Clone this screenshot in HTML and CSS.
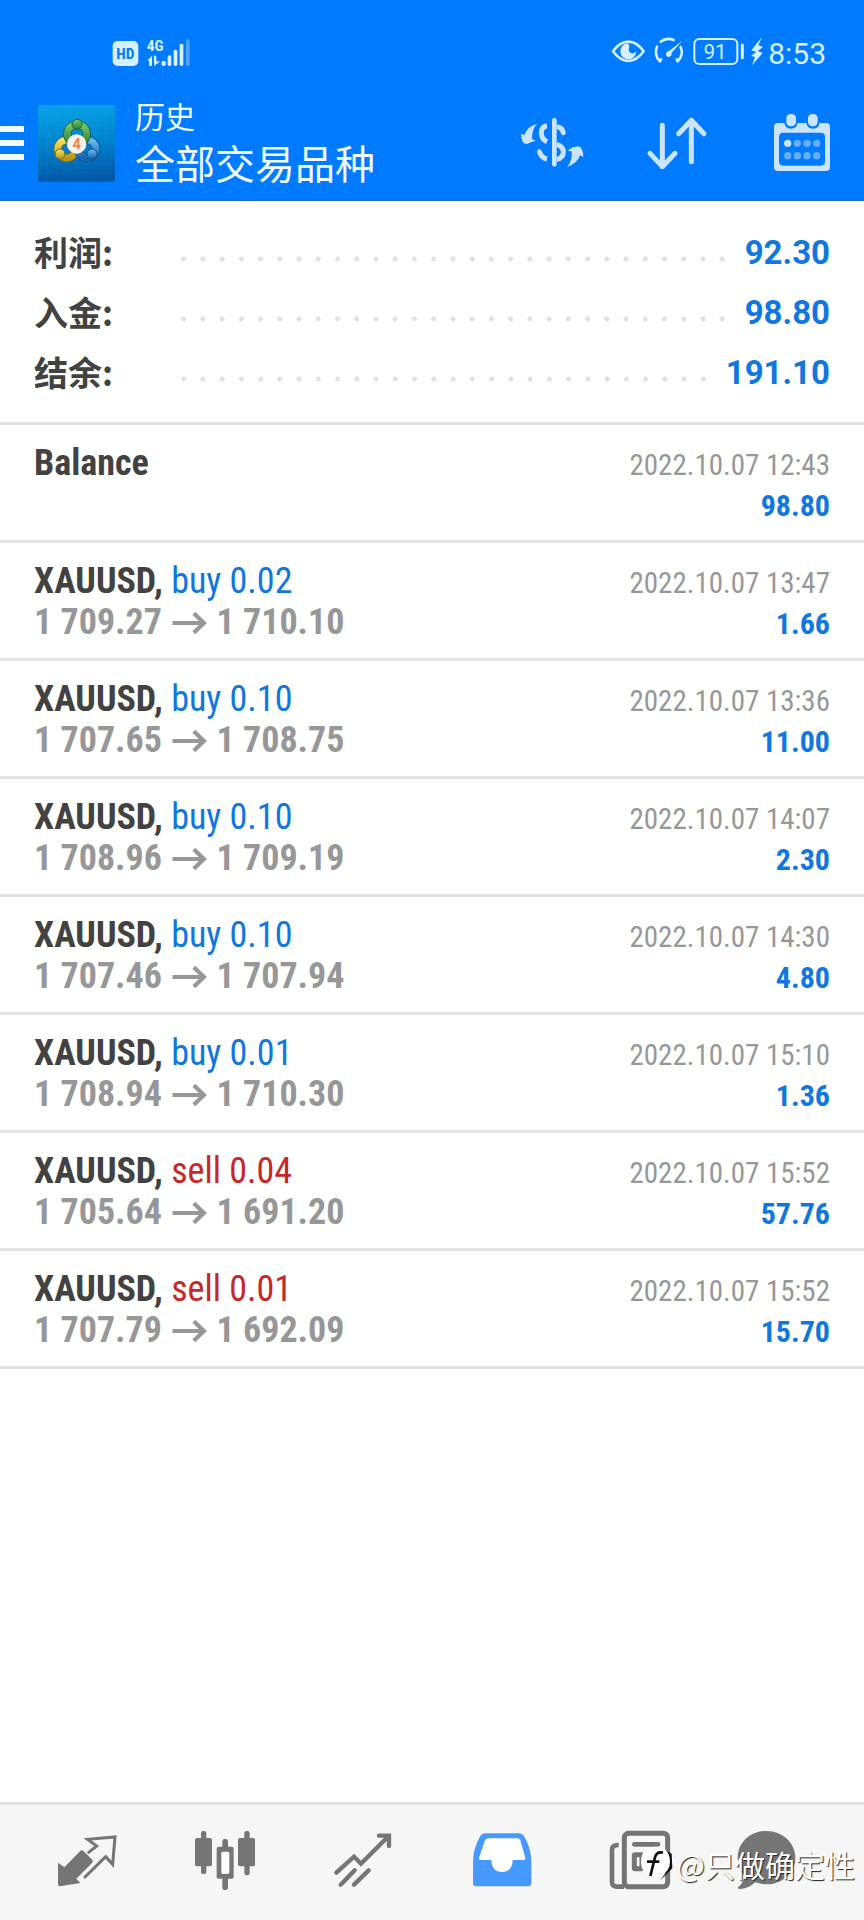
FILE: index.html
```html
<!DOCTYPE html>
<html lang="zh-CN">
<head>
<meta charset="utf-8">
<meta name="viewport" content="width=device-width, initial-scale=1">
<title>历史</title>
<link rel="stylesheet" href="styles.css">
</head>
<body>
<div class="app">
  <header class="header">
    <div class="status">
      <svg class="status-left" viewBox="66 42 240 102" width="80" height="34" aria-hidden="true">
        <rect x="68" y="60" width="77" height="75" rx="15" fill="#d6f0ff"/>
        <text x="106" y="114" class="hd-text" text-anchor="middle">HD</text>
        <text x="170" y="91" class="net-text">4G</text>
        <path d="M171 119l15-15v31h-9v-17zM191 104h8v17h12l-18 14z" fill="#d6f0ff"/>
        <rect x="215" y="119" width="12" height="16" rx="5" fill="#d6f0ff"/>
        <rect x="233" y="103" width="11" height="32" rx="5" fill="#d6f0ff"/>
        <rect x="251" y="86" width="11" height="49" rx="5" fill="#d6f0ff"/>
        <rect x="269" y="68" width="11" height="67" rx="5" fill="#d6f0ff"/>
        <rect x="288" y="54" width="11" height="81" rx="5" fill="#4ba4ff"/>
      </svg>
      <div class="status-right">
        <svg viewBox="33 33 456 99" width="152" height="33" aria-hidden="true" fill="none" stroke="#d6f0ff" stroke-linecap="round" stroke-linejoin="round">
          <path d="M39 82Q60 53 85 53T131 82Q110 111 85 111T39 82Z" stroke-width="8"/>
          <path d="M83 58A24 24 0 1 0 109 82A14 14 0 0 1 94 88Q82 82 88 70Q89 63 83 58Z" fill="#d6f0ff" stroke="none"/>
          <path d="M182 53A38 38 0 0 1 221 48M171 68A38 38 0 0 0 180 112L183 106M242 69A38 38 0 0 1 233 112L230 106" stroke-width="8"/>
          <path d="M247 50L208 80Q196 84 198 93Q202 102 211 97Q216 94 215 86Z" fill="#d6f0ff" stroke="none"/>
          <rect x="283" y="45" width="129" height="75" rx="15" stroke-width="6"/>
          <path d="M427 63v38" stroke-width="9"/>
          <text x="345" y="105" class="battery-text" text-anchor="middle">91</text>
          <path d="M486 39L454 79L469 84L453 95L465 99L456 124L488 87L473 81L489 69L475 64Z" fill="#d6f0ff" stroke="none"/>
        </svg>
        <time>8:53</time>
      </div>
    </div>
    <div class="appbar">
      <button class="menu" type="button" aria-label="菜单"><span></span><span></span><span></span></button>
      <svg class="logo" viewBox="0 0 231 231" width="77" height="77" role="img" aria-label="MetaTrader 4">
        <defs>
          <linearGradient id="sky" x1="0.2" y1="0" x2="0.3" y2="1"><stop offset="0" stop-color="#08a4e8"/><stop offset="0.5" stop-color="#0283cd"/><stop offset="1" stop-color="#0058a8"/></linearGradient>
          <linearGradient id="green" x2="0" y2="1"><stop offset="0" stop-color="#7cc56b"/><stop offset="1" stop-color="#268436"/></linearGradient>
          <linearGradient id="gold" x2="0" y2="1"><stop offset="0" stop-color="#f4e567"/><stop offset="1" stop-color="#bd9519"/></linearGradient>
          <linearGradient id="blue" x2="0" y2="1"><stop offset="0" stop-color="#68bdf0"/><stop offset="1" stop-color="#1764b1"/></linearGradient>
        </defs>
        <rect width="231" height="231" fill="url(#sky)"/>
        <path d="M29 0v231M58 0v231M87 0v231M116 0v231M145 0v231M174 0v231M203 0v231M0 29h231M0 58h231M0 87h231M0 116h231M0 145h231M0 174h231M0 203h231" stroke="#35c3ee" stroke-opacity="0.15" stroke-width="2"/>
        <circle cx="86" cy="132" r="27" fill="none" stroke="#6c6a25" stroke-width="25"/>
        <circle cx="86" cy="132" r="27" fill="none" stroke="url(#gold)" stroke-width="20"/>
        <circle cx="147" cy="132" r="27" fill="none" stroke="#14518c" stroke-width="25"/>
        <circle cx="147" cy="132" r="27" fill="none" stroke="url(#blue)" stroke-width="20"/>
        <circle cx="117" cy="87" r="29" fill="none" stroke="#1c6440" stroke-width="25"/>
        <circle cx="117" cy="87" r="29" fill="none" stroke="url(#green)" stroke-width="20"/>
        <circle cx="117" cy="58" r="15" fill="url(#green)" stroke="#1c6440" stroke-width="3"/>
        <circle cx="66" cy="147" r="15" fill="url(#gold)" stroke="#6c6a25" stroke-width="3"/>
        <circle cx="162" cy="147" r="15" fill="url(#blue)" stroke="#14518c" stroke-width="3"/>
        <circle cx="116" cy="117" r="29" fill="#f8f3ec"/>
        <text x="116" y="132" text-anchor="middle" class="logo-text">4</text>
      </svg>
      <div class="titles">
        <p class="section">历史</p>
        <h1 class="title">全部交易品种</h1>
      </div>
      <div class="actions">
        <button class="icon-btn" type="button" aria-label="货币">
          <svg viewBox="54 33 192 192" width="64" height="64" fill="#cce5ff">
            <path d="M63 101L73 105Q83 78 111 72Q95 88 96 117L107 122L80 132Q64 132 63 101Z"/>
            <path d="M250 171L240 166Q232 191 202 200Q217 184 215 154L203 153Q216 140 234 139Q250 142 250 171Z"/>
            <path d="M163 61v132" fill="none" stroke="#cce5ff" stroke-width="14" stroke-linecap="round"/>
            <path d="M141 77Q124 80 124 98Q124 117 141 125M119 155Q122 173 141 177M170 80Q187 81 190 99M170 133Q190 139 190 156Q190 174 170 178" fill="none" stroke="#cce5ff" stroke-width="15"/>
            <circle cx="190" cy="99" r="7"/><circle cx="118" cy="155" r="7"/>
          </svg>
        </button>
        <button class="icon-btn" type="button" aria-label="排序">
          <svg viewBox="432 33 192 192" width="64" height="64" fill="none" stroke="#cce5ff" stroke-width="15" stroke-linecap="round" stroke-linejoin="round">
            <path d="M487 76v124M450 160l37 40 38-40M574 185V61M536 101l38-40 38 40"/>
          </svg>
        </button>
        <button class="icon-btn" type="button" aria-label="日期">
          <svg viewBox="810 33 192 192" width="64" height="64" fill="#cce5ff">
            <path fill-rule="evenodd" d="M834 69h19q2 17 20 17t20-17h26q2 17 20 17t20-17h19q12 0 12 12v120q0 12-12 12H834q-12 0-12-12V81q0-12 12-12ZM850 98q-13 0-13 13v73q0 13 13 13h112q13 0 13-13v-73q0-13-13-13Z"/>
            <rect x="859" y="42" width="29" height="37" rx="13"/><rect x="924" y="42" width="29" height="37" rx="13"/>
            <circle cx="863" cy="130" r="11"/>
            <g fill="#66afff"><circle cx="892" cy="130" r="11"/><circle cx="921" cy="130" r="11"/><circle cx="950" cy="130" r="11"/><circle cx="863" cy="167" r="11"/><circle cx="892" cy="167" r="11"/><circle cx="921" cy="167" r="11"/><circle cx="950" cy="167" r="11"/></g>
          </svg>
        </button>
      </div>
    </div>
  </header>

  <main class="content">
    <dl class="summary">
      <div class="sum-row"><dt>利润:</dt><dd><span class="dots"></span><b>92.30</b></dd></div>
      <div class="sum-row"><dt>入金:</dt><dd><span class="dots"></span><b>98.80</b></dd></div>
      <div class="sum-row"><dt>结余:</dt><dd><span class="dots"></span><b>191.10</b></dd></div>
    </dl>
    <ul class="deals">
      <li class="deal"><div class="line"><span class="name">Balance</span><time class="date">2022.10.07 12:43</time></div><div class="line"><span class="price">&nbsp;</span><span class="profit">98.80</span></div></li>
      <li class="deal"><div class="line"><span class="name">XAUUSD, <span class="buy">buy 0.02</span></span><time class="date">2022.10.07 13:47</time></div><div class="line"><span class="price">1 709.27 <svg class="arrow" viewBox="0 0 102 68" width="34" height="22"><path d="M0 34H96M66 4L97 34L66 64"/></svg> 1 710.10</span><span class="profit">1.66</span></div></li>
      <li class="deal"><div class="line"><span class="name">XAUUSD, <span class="buy">buy 0.10</span></span><time class="date">2022.10.07 13:36</time></div><div class="line"><span class="price">1 707.65 <svg class="arrow" viewBox="0 0 102 68" width="34" height="22"><path d="M0 34H96M66 4L97 34L66 64"/></svg> 1 708.75</span><span class="profit">11.00</span></div></li>
      <li class="deal"><div class="line"><span class="name">XAUUSD, <span class="buy">buy 0.10</span></span><time class="date">2022.10.07 14:07</time></div><div class="line"><span class="price">1 708.96 <svg class="arrow" viewBox="0 0 102 68" width="34" height="22"><path d="M0 34H96M66 4L97 34L66 64"/></svg> 1 709.19</span><span class="profit">2.30</span></div></li>
      <li class="deal"><div class="line"><span class="name">XAUUSD, <span class="buy">buy 0.10</span></span><time class="date">2022.10.07 14:30</time></div><div class="line"><span class="price">1 707.46 <svg class="arrow" viewBox="0 0 102 68" width="34" height="22"><path d="M0 34H96M66 4L97 34L66 64"/></svg> 1 707.94</span><span class="profit">4.80</span></div></li>
      <li class="deal"><div class="line"><span class="name">XAUUSD, <span class="buy">buy 0.01</span></span><time class="date">2022.10.07 15:10</time></div><div class="line"><span class="price">1 708.94 <svg class="arrow" viewBox="0 0 102 68" width="34" height="22"><path d="M0 34H96M66 4L97 34L66 64"/></svg> 1 710.30</span><span class="profit">1.36</span></div></li>
      <li class="deal"><div class="line"><span class="name">XAUUSD, <span class="sell">sell 0.04</span></span><time class="date">2022.10.07 15:52</time></div><div class="line"><span class="price">1 705.64 <svg class="arrow" viewBox="0 0 102 68" width="34" height="22"><path d="M0 34H96M66 4L97 34L66 64"/></svg> 1 691.20</span><span class="profit">57.76</span></div></li>
      <li class="deal"><div class="line"><span class="name">XAUUSD, <span class="sell">sell 0.01</span></span><time class="date">2022.10.07 15:52</time></div><div class="line"><span class="price">1 707.79 <svg class="arrow" viewBox="0 0 102 68" width="34" height="22"><path d="M0 34H96M66 4L97 34L66 64"/></svg> 1 692.09</span><span class="profit">15.70</span></div></li>
    </ul>
  </main>

  <nav class="tabs" aria-label="导航">
    <a href="#quotes" aria-label="行情"><svg viewBox="168 114 192 192" width="64" height="64" fill="#757575">
      <path d="M177 218L196 232L243 184Q248 178 254 184L280 209Q284 214 279 219L232 266L244 279L182 289Q177 288 177 283Z"/>
      <path d="M269 187L293 168L266 148L348 141L341 223L320 200L258 261" fill="none" stroke="#757575" stroke-width="9" stroke-linecap="round"/>
    </svg></a>
    <a href="#chart" aria-label="图表"><svg viewBox="579 114 192 192" width="64" height="64" fill="#757575">
      <rect x="603" y="123" width="16" height="129" rx="7"/><rect x="585" y="144" width="51" height="85" rx="6"/>
      <rect x="733" y="123" width="16" height="133" rx="7"/><rect x="714" y="144" width="51" height="85" rx="6"/>
      <rect x="667" y="147" width="17" height="36" rx="7"/><rect x="667" y="255" width="17" height="45" rx="7"/>
      <path fill="#fff" d="M662 182h27v73h-27z"/>
      <path fill-rule="evenodd" d="M656 170h39q6 0 6 6v85q0 5-6 5h-39q-6 0-6-5v-85q0-6 6-6ZM669 185q-5 0-5 5v57q0 5 5 5h14q5 0 5-5v-57q0-5-5-5Z"/>
    </svg></a>
    <a href="#trade" aria-label="交易"><svg viewBox="993 114 192 192" width="64" height="64" fill="none" stroke="#757575" stroke-width="13" stroke-linecap="round">
      <path d="M1009 248L1062 200L1083 221L1166 138M1137 137H1167V168M1022 284L1064 241M1062 284L1106 241"/>
    </svg></a>
    <a href="#history" aria-label="历史" aria-current="page"><svg viewBox="111 114 192 192" width="64" height="64">
      <path fill="#fff" d="M154 140H262L283 216H243L207 250L170 216H133Z"/>
      <path fill="#4599ff" fill-rule="evenodd" d="M156 130H259Q268 130 273 138Q295 175 295 216V280Q295 289 285 289H130Q120 289 120 280V216Q120 175 142 138Q147 130 156 130ZM166 145Q159 145 156 151L138 203Q136 210 142 210H175Q176 246 207 246T239 210H272Q279 210 277 203L262 151Q260 145 253 145Z"/>
    </svg></a>
    <a href="#news" aria-label="新闻"><svg viewBox="528 114 192 192" width="64" height="64" fill="none" stroke="#757575">
      <rect x="577" y="130" width="130" height="160" rx="13" stroke-width="15"/>
      <path d="M560 165Q540 164 540 180V276Q540 290 556 290H576" stroke-width="14"/>
      <path d="M607 163H678" stroke-width="14" stroke-linecap="round"/>
      <path d="M656 192H685M656 214H685M656 236H685" stroke-width="11" stroke-linecap="round"/>
      <rect x="607" y="194" width="23" height="42" rx="2" stroke-width="15"/>
    </svg></a>
    <a href="#messages" aria-label="消息"><svg viewBox="942 114 192 192" width="64" height="64" fill="#757575">
      <path d="M1003 123C1051 123 1090 158 1090 203S1051 283 1003 283Q986 283 970 277Q950 296 922 297Q915 296 919 291Q936 277 937 257Q917 234 917 203C917 158 955 123 1003 123Z"/>
    </svg></a>
  </nav>
  <div class="watermark">
    <svg viewBox="618 188 102 108" width="34" height="36" aria-hidden="true">
      <path d="M682 291L718 255L716 211L700 202V266Z" fill="#111"/>
      <path d="M667 190Q709 189 711 234Q712 267 679 278L668 291L665 279Q625 278 624 235Q625 191 667 190Z" fill="#fff"/>
      <path d="M690 208Q671 204 666 222L652 278M642 235H679" fill="none" stroke="#111" stroke-width="8"/>
    </svg>
    <span>@只做确定性</span>
  </div>
</div>
</body>
</html>
```

FILE: styles.css
```css
* { box-sizing: border-box; }

body, h1, p, ul, dl, dd { margin: 0; padding: 0; }

body {
  background: #fff;
  color: #424242;
  font-family: Roboto, "Noto Sans CJK SC", sans-serif;
}

.app {
  position: relative;
  display: flex;
  flex-direction: column;
  min-height: 100vh;
}

svg { display: block; overflow: visible; }

.header {
  background: #007aff;
  border-bottom: 2px solid #1670cf;
  color: #f0faff;
}

.status {
  display: flex;
  justify-content: space-between;
  align-items: center;
  height: 87px;
  padding: 16px 38px 0 112px;
}

.status-right {
  display: flex;
  align-items: center;
  gap: 5px;
  font-size: 30px;
  line-height: 34px;
  color: #d6f0ff;
}

.status-right time { padding-top: 4px; }

.hd-text { font: bold 46px "Roboto Condensed", Roboto, sans-serif; fill: #007aff; }
.net-text { font: bold 46px "Roboto Condensed", Roboto, sans-serif; fill: #d6f0ff; }
.battery-text { font: 62px Roboto, sans-serif; fill: #d6f0ff; stroke: none; }
.logo-text { font: bold 44px Roboto, sans-serif; fill: #ee8845; }

.appbar {
  display: flex;
  align-items: center;
  height: 112px;
  padding-right: 30px;
}

button {
  padding: 0;
  border: 0;
  background: none;
}

.menu {
  display: flex;
  flex-direction: column;
  gap: 8px;
  width: 24px;
  margin-right: 14px;
}

.menu span { height: 6px; background: #f0faff; }

.titles {
  flex: 1;
  margin-left: 20px;
  padding-bottom: 4px;
  font-family: "Noto Sans CJK SC", sans-serif;
}

.section { font-size: 30px; line-height: 42px; }
.title { font-size: 40px; line-height: 52px; font-weight: 400; }

.actions { display: flex; gap: 62px; }

.content { flex: 1; }

.summary {
  padding: 21px 34px 20px;
  border-bottom: 3px solid #e3e3e3;
}

.sum-row {
  display: flex;
  align-items: center;
  height: 60px;
}

.sum-row dt {
  width: 140px;
  font: bold 34px/60px "Noto Sans CJK SC", sans-serif;
}

.sum-row dd {
  display: flex;
  flex: 1;
  align-items: center;
}

.dots {
  flex: 1;
  height: 6px;
  margin: 14px 13px 0 0;
  background: radial-gradient(circle, #e1e1e1 0 2px, transparent 3px) 0 0 / 19px 6px round;
}

.sum-row b { font-size: 33px; color: #1077df; }

.deals { list-style: none; }

.deal {
  height: 118px;
  padding: 14px 34px 0;
  border-bottom: 3px solid #e3e3e3;
  font-family: "Roboto Condensed", "Liberation Sans Narrow", Roboto, sans-serif;
}

.line {
  display: flex;
  justify-content: space-between;
  align-items: baseline;
  height: 41px;
  line-height: 48px;
}

.name, .price { font-size: 36px; font-weight: 700; white-space: nowrap; }
.price { color: #97979a; }
.buy, .sell { font-weight: 400; }
.buy, .profit { color: #1077df; }
.sell { color: #c62828; }
.date { font-size: 29px; color: #97979a; }
.profit { font-size: 30px; font-weight: 700; }

.arrow {
  display: inline-block;
  margin: 0 2px;
  fill: none;
  stroke: #97979a;
  stroke-width: 13;
}

.tabs {
  display: flex;
  justify-content: space-between;
  height: 118px;
  padding: 23px 54px 0 55px;
  border-top: 3px solid #e0e0e0;
  background: #f6f6f6;
}

.watermark {
  position: absolute;
  right: 9px;
  bottom: 34px;
  display: flex;
  align-items: center;
  gap: 4px;
  color: #fff;
  font: 30px/44px "Noto Sans CJK SC", sans-serif;
  text-shadow: 1px 1px 1px #222;
}
```
